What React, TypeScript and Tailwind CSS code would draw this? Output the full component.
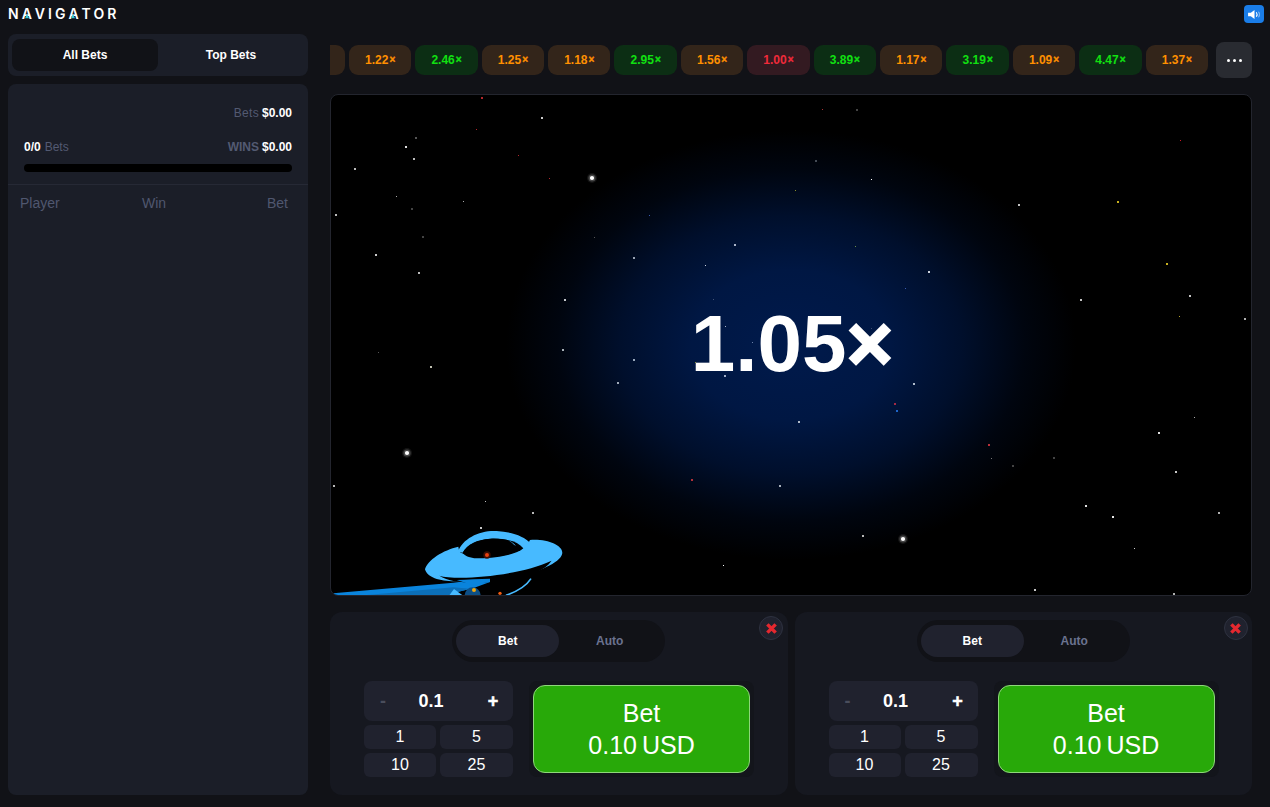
import React from "react";

type Star = [number, number, number, string];

const stars: Star[] = [
  [482, 98, 2, "#b3262b"], [542, 118, 2, "#cccccc"], [476, 129, 1, "#b3262b"], [416, 138, 2, "#555555"],
  [406, 147, 2, "#e0e0e0"], [414, 159, 2, "#bbbbbb"], [518, 155, 1, "#b3262b"], [355, 169, 2, "#bbbbbb"],
  [549, 178, 1, "#b3262b"], [396, 196, 1, "#aaaaaa"], [463, 201, 1, "#aaaaaa"], [336, 215, 2, "#bbbbbb"],
  [412, 209, 2, "#444444"], [594, 237, 1, "#555555"], [423, 237, 2, "#444444"], [634, 258, 2, "#99a3b3"],
  [376, 255, 2, "#cccccc"], [419, 273, 2, "#bbbbbb"], [565, 300, 2, "#c4c8cc"],
  [822, 109, 1, "#aa3333"], [857, 110, 2, "#444444"], [816, 161, 2, "#444b55"], [871, 179, 1, "#ffffff"],
  [795, 190, 1, "#8a8f2a"], [649, 215, 1, "#3a5ab0"], [735, 245, 2, "#aab4c8"], [705, 265, 1, "#ccd4e0"],
  [855, 246, 1, "#6b8f4a"], [929, 272, 2, "#ccd2dc"],
  [1180, 140, 1, "#d01525"], [1019, 205, 2, "#c4c4c4"], [1118, 202, 2, "#c9b11f"], [1167, 264, 2, "#c9b11f"],
  [1081, 300, 2, "#c4c4c4"], [1190, 296, 2, "#c4c4c4"], [1179, 316, 1, "#b5a52a"], [1245, 319, 2, "#b0b0b0"],
  [378, 352, 1, "#555555"], [431, 367, 2, "#c0c0b0"], [563, 350, 2, "#a8b0b8"], [634, 360, 2, "#98a8bc"],
  [618, 383, 2, "#a0aab8"], [334, 486, 2, "#b8b8b8"], [485, 501, 1, "#c0c0c0"], [533, 513, 2, "#b8b8b8"],
  [713, 299, 1, "#445577"], [905, 288, 1, "#3a5ab0"], [725, 326, 1, "#aab4c8"], [752, 342, 1, "#6a80a8"],
  [695, 362, 1, "#8a8f2a"], [725, 376, 2, "#a0aec8"], [914, 384, 2, "#b0bccc"], [871, 328, 1, "#3a4a70"],
  [895, 404, 2, "#a52a45"], [897, 411, 2, "#1e64c8"], [799, 422, 2, "#b0bac8"], [692, 480, 2, "#b0303a"],
  [780, 486, 2, "#a8b0bc"], [863, 536, 2, "#b8b8b8"], [723, 565, 1, "#ffffff"],
  [989, 445, 2, "#b8303a"], [991, 458, 1, "#777777"], [1013, 466, 2, "#444444"], [1054, 458, 2, "#444444"],
  [1194, 417, 1, "#aaaaaa"], [1159, 433, 2, "#e0e0e0"], [1176, 472, 2, "#c8c8c8"], [1086, 506, 2, "#e0e0e0"],
  [1113, 517, 2, "#e8e8e8"], [1219, 513, 2, "#b0b0b0"], [1134, 548, 1, "#d0d0d0"], [1035, 590, 2, "#c8c8c8"],
  [1174, 594, 2, "#b0b0b0"], [481, 528, 2, "#c8c8c8"], [485, 544, 2, "#c0c0c0"],
];

const bigStars: [number, number][] = [[592, 178], [407, 453], [903, 539]];

type Tone = "o" | "g" | "r";
const chips: [string, Tone][] = [
  ["", "o"], ["1.22", "o"], ["2.46", "g"], ["1.25", "o"], ["1.18", "o"], ["2.95", "g"], ["1.56", "o"],
  ["1.00", "r"], ["3.89", "g"], ["1.17", "o"], ["3.19", "g"], ["1.09", "o"], ["4.47", "g"], ["1.37", "o"],
];

const toneClass: Record<Tone, string> = {
  o: "bg-[#33251a] text-[#ff9000]",
  g: "bg-[#0c2e14] text-[#11e011]",
  r: "bg-[#331a21] text-[#f02a3a]",
};

function LogoA() {
  return (
    <span className="relative inline-block">
      A
      <svg viewBox="0 0 6 7" className="absolute bottom-[2px] left-[3px] h-[6px] w-[4px]">
        <path d="M3 0 L6 7 L0 7 Z" fill="#35c9d6" />
      </svg>
    </span>
  );
}

function BetPanel() {
  return (
    <div className="relative h-[183px] rounded-xl bg-[#161820] pt-2">
      <button className="absolute right-[4.5px] top-[4px] flex h-6 w-6 items-center justify-center rounded-full border border-[#2e3240] bg-[#20222e]">
        <svg viewBox="0 0 12 12" className="h-[11px] w-[11px]">
          <path d="M1.5 1.5 L10.5 10.5 M10.5 1.5 L1.5 10.5" stroke="#e5282f" strokeWidth="3.8" />
        </svg>
      </button>
      <div className="mx-auto flex h-[42px] w-[213px] items-center rounded-full bg-[#111217] px-1">
        <div className="flex h-8 w-[103px] items-center justify-center rounded-full bg-[#20222e] text-xs font-bold text-white">Bet</div>
        <div className="flex h-8 w-[101px] items-center justify-center text-xs font-bold text-[#6b7390]">Auto</div>
      </div>
      <div className="mt-[19px] flex gap-4 pl-[34px]">
        <div className="w-[149px]">
          <div className="flex h-10 items-center rounded-lg bg-[#20222e] text-white">
            <span className="w-[38px] text-center text-lg font-bold text-[#4a4e5c]">-</span>
            <span className="w-[58px] text-center text-lg font-bold">0.1</span>
            <span className="ml-[22px] w-[22px] text-center text-lg font-bold [-webkit-text-stroke:0.5px_white]">+</span>
          </div>
          <div className="mt-1 grid grid-cols-[72px_73px] gap-1 text-center text-base text-white">
            <div className="flex h-6 items-center justify-center rounded-md bg-[#20222e]">1</div>
            <div className="flex h-6 items-center justify-center rounded-md bg-[#20222e]">5</div>
            <div className="flex h-6 items-center justify-center rounded-md bg-[#20222e]">10</div>
            <div className="flex h-6 items-center justify-center rounded-md bg-[#20222e]">25</div>
          </div>
        </div>
        <div className="rounded-lg bg-[#13151b] p-1">
          <button className="flex h-[88px] w-[217px] flex-col items-center justify-center rounded-xl border border-[#8ed77a] bg-[#28a909] pb-[1px] text-[25px] leading-8 text-white [word-spacing:-2px]">
            <span>Bet</span>
            <span>0.10 USD</span>
          </button>
        </div>
      </div>
    </div>
  );
}

export default function App() {
  return (
    <div className="h-[807px] w-full overflow-hidden bg-[#111217] font-['Liberation_Sans',Arial,sans-serif]">
      <header className="flex h-[28px] items-center justify-between pl-2 pr-[6px]">
        <div className="flex h-[28px] items-center pb-[1px] font-['Inter',sans-serif] text-sm font-semibold leading-none tracking-[3px] text-white">
          N<LogoA />VIG<LogoA />TOR
        </div>
        <button className="flex h-[18px] w-5 items-center justify-center rounded bg-[#1a7de8]">
          <svg viewBox="0 0 16 12" className="h-[11px] w-[15px]">
            <path d="M1 4 H4 L8 1 V11 L4 8 H1 Z" fill="#ffffff" />
            <path d="M10 3.5 C11 5 11 7 10 8.5" stroke="#ffffff" strokeWidth="1.2" fill="none" />
            <path d="M12.5 3 C13.6 5 13.6 7 12.5 9" stroke="#cfe4fb" strokeWidth="0.8" fill="none" />
          </svg>
        </button>
      </header>
      <div className="flex">
        <aside className="ml-2 w-[300px] pt-[6px]">
          <div className="flex h-[42px] items-center rounded-lg bg-[#1b1e28] px-1">
            <div className="flex h-8 w-[146px] items-center justify-center rounded-lg bg-[#111217] text-xs font-bold text-white">All Bets</div>
            <div className="flex h-8 flex-1 items-center justify-center text-xs font-bold text-white">Top Bets</div>
          </div>
          <div className="mt-2 h-[711px] rounded-lg bg-[#1b1e28]">
            <div className="px-4 pt-[22px] text-xs">
              <div className="flex h-[14px] items-center justify-end gap-[3px]">
                <span className="tracking-[0.3px] text-[#535a72]">Bets</span>
                <span className="font-bold text-white">$0.00</span>
              </div>
              <div className="mt-5 flex h-[14px] items-center justify-between">
                <div className="flex gap-1">
                  <span className="font-bold text-white">0/0</span>
                  <span className="text-[#535a72]">Bets</span>
                </div>
                <div className="flex gap-[3px]">
                  <span className="font-bold text-[#535a72]">WINS</span>
                  <span className="font-bold text-white">$0.00</span>
                </div>
              </div>
              <div className="mt-[10px] h-2 rounded-full bg-black" />
            </div>
            <div className="mt-3 border-t border-[#262935]" />
            <div className="mt-[10px] grid grid-cols-3 pl-3 pr-5 text-sm leading-4 text-[#50576f]">
              <span>Player</span>
              <span className="text-center">Win</span>
              <span className="text-right">Bet</span>
            </div>
          </div>
        </aside>
        <main className="ml-[22px] w-[922px] pt-[14px]">
          <div className="flex h-9 items-center">
            <div className="flex w-[878px] justify-end gap-1 overflow-hidden">
              {chips.map(([label, tone], i) => (
                <div
                  key={i}
                  className={`flex h-[30px] w-[62.4px] shrink-0 items-center justify-center rounded-[9px] text-xs font-bold ${toneClass[tone]}`}
                >
                  {label}
                  {label && <span className="ml-[1px] text-[10px] [-webkit-text-stroke:0.4px_currentColor]">×</span>}
                </div>
              ))}
            </div>
            <button className="ml-2 flex h-9 w-9 items-center justify-center gap-[3px] rounded-lg bg-[#292b31]">
              <span className="h-[3px] w-[3px] rounded-full bg-white" />
              <span className="h-[3px] w-[3px] rounded-full bg-white" />
              <span className="h-[3px] w-[3px] rounded-full bg-white" />
            </button>
          </div>
          <div className="relative mt-4 flex h-[502px] items-center justify-center overflow-hidden rounded-lg border border-[#23252e] bg-black bg-[radial-gradient(ellipse_285px_215px_at_460px_250px,#001a4c_0%,#001743_35%,#000f2c_60%,#00050f_82%,#000000_100%)]">
            <svg viewBox="331 95 920 500" className="absolute inset-0 h-full w-full">
              {stars.map(([x, y, s, c], i) => (
                <rect key={i} x={s === 2 ? x - 1 : x} y={s === 2 ? y - 1 : y} width={s} height={s} fill={c} />
              ))}
              {bigStars.map(([x, y], i) => (
                <g key={i}>
                  <circle cx={x} cy={y} r={5} fill="#ffffff" opacity={0.08} />
                  <circle cx={x} cy={y} r={3.6} fill="#ffffff" opacity={0.22} />
                  <circle cx={x} cy={y} r={2.1} fill="#ffffff" />
                </g>
              ))}
              <g transform="translate(330 510) scale(0.3333)">
                <path d="M10 250 L370 218 L480 204 L480 216 L425 236 L370 248 L360 256 L10 256 Z" fill="#0a84dc" />
                <path d="M100 256 L370 232 L420 236 L370 250 L360 256 Z" fill="#0c6fb8" />
                <circle cx="428" cy="256" r="24" fill="#0d4f86" />
                <path d="M358 256 L372 237 L398 256 Z" fill="#47baff" />
                <path
                  d="M285 178 C292 150 340 120 385 110 L388 125 C420 145 520 150 580 115 C590 105 596 100 600 90 C650 86 697 105 697 128 C697 152 640 182 560 200 C500 212 420 217 380 214 C340 214 293 207 285 178 Z"
                  fill="#47baff"
                />
                <path
                  d="M384 125 C398 85 450 60 500 63 C545 66 582 78 602 100 L580 118 C560 92 520 84 480 86 C440 89 412 102 398 128 Z"
                  fill="#47baff"
                />
                <path
                  d="M398 128 C412 102 450 86 490 86 C530 86 563 94 580 115 C560 133 500 146 440 145 C420 144 405 138 398 128 Z"
                  fill="#000000"
                />
                <path d="M534 90 C543 93 552 100 558 108 L552 104 C546 98 540 94 534 90 Z" fill="#47baff" />
                <path d="M328 197 C380 212 560 200 665 152 C640 190 570 205 480 216 C420 220 360 218 328 197 Z" fill="#000000" />
                <path d="M380 210 C410 208 450 207 480 206 L480 216 L425 224 Z" fill="#0a84dc" />
                <path d="M603 206 C590 226 560 245 528 256" stroke="#47baff" strokeWidth="5" fill="none" />
                <circle cx="471" cy="135" r="11" fill="#3a0f05" />
                <circle cx="471" cy="135" r="6" fill="#e8400f" />
                <circle cx="432" cy="240" r="6" fill="#f0a80f" />
                <circle cx="510" cy="250" r="5" fill="#ef5a10" />
              </g>
            </svg>
            <div className="relative pb-[2px] pl-[2px] text-[80px] font-bold leading-none text-white">
              1.05<span className="[-webkit-text-stroke:2px_white]">×</span>
            </div>
          </div>
          <div className="mt-4 grid grid-cols-2 gap-[7px]">
            <BetPanel />
            <BetPanel />
          </div>
        </main>
      </div>
    </div>
  );
}
